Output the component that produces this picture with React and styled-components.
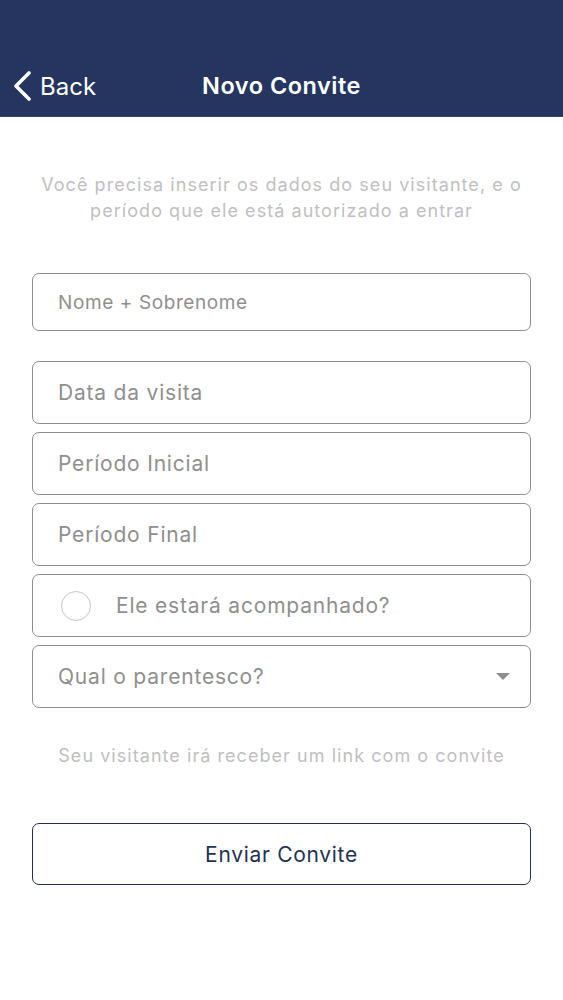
import React from "react";
import styled, { createGlobalStyle } from "styled-components";

const GlobalStyle = createGlobalStyle`
  html, body {
    margin: 0;
    padding: 0;
    background: #ffffff;
  }
  body {
    font-family: Inter, "Open Sans", "Liberation Sans", sans-serif;
    -webkit-font-smoothing: antialiased;
  }
`;

const Screen = styled.div`
  width: 563px;
  min-height: 1000px;
  background: #ffffff;
  display: flex;
  flex-direction: column;
`;

const Header = styled.header`
  height: 117px;
  background: #253560;
  box-sizing: border-box;
  padding-top: 68px;
  display: grid;
  grid-template-columns: 1fr auto 1fr;
  align-items: start;
  border-bottom: 1px solid #3a4564;
`;

const BackButton = styled.button`
  display: flex;
  align-items: center;
  gap: 8px;
  background: none;
  border: none;
  padding: 0 0 0 12px;
  color: #ffffff;
  font-family: inherit;
  font-size: 24px;
  font-weight: 400;
  height: 36px;
  cursor: pointer;
  justify-self: start;
`;

const Title = styled.h1`
  margin: 0;
  color: #ffffff;
  font-size: 23.5px;
  font-weight: 600;
  letter-spacing: 0.5px;
  height: 36px;
  line-height: 36px;
`;

const Body = styled.main`
  display: flex;
  flex-direction: column;
  padding: 0 32px;
`;

const Hint = styled.p`
  margin: ${(p) => p.$margin};
  text-align: center;
  color: #bfbfbf;
  font-size: 18px;
  line-height: 26px;
  letter-spacing: 1.05px;
  white-space: nowrap;
`;

const Form = styled.div`
  display: flex;
  flex-direction: column;
  gap: 8px;
`;

const Field = styled.div`
  height: ${(p) => p.$height || 63}px;
  box-sizing: border-box;
  border: 1.5px solid #8e8e8e;
  border-radius: 7px;
  display: flex;
  align-items: center;
  padding: 0 ${(p) => p.$padRight || 20}px 0 ${(p) => p.$padLeft || 25}px;
  margin-bottom: ${(p) => p.$after || 0}px;
`;

const Placeholder = styled.span`
  flex: 1;
  color: #8f8f8f;
  font-size: ${(p) => p.$size || 21}px;
  letter-spacing: ${(p) => p.$spacing || 0.8}px;
`;

const Radio = styled.span`
  width: 30px;
  height: 30px;
  border-radius: 50%;
  border: 1.5px solid #c6c6c6;
  box-sizing: border-box;
  margin-right: 25px;
  flex-shrink: 0;
`;

const Caret = styled.span`
  width: 0;
  height: 0;
  border-left: 7px solid transparent;
  border-right: 7px solid transparent;
  border-top: 7px solid #8e8e8e;
`;

const SendButton = styled.button`
  height: 62px;
  border: 1.5px solid #253055;
  border-radius: 7px;
  background: #ffffff;
  color: #253055;
  font-family: inherit;
  font-size: 21px;
  letter-spacing: 0.7px;
  cursor: pointer;
`;

const ChevronLeft = () => (
  <svg width="20" height="30" viewBox="0 0 20 30">
    <path
      d="M17 2 L4 15 L17 28"
      fill="none"
      stroke="#ffffff"
      strokeWidth="3.6"
      strokeLinecap="round"
      strokeLinejoin="round"
    />
  </svg>
);

export default function App() {
  return (
    <Screen>
      <GlobalStyle />
      <Header>
        <BackButton>
          <ChevronLeft />
          Back
        </BackButton>
        <Title>Novo Convite</Title>
        <span />
      </Header>
      <Body>
        <Hint $margin="55px 0 49px">
          Você precisa inserir os dados do seu visitante, e o
          <br />
          período que ele está autorizado a entrar
        </Hint>
        <Form>
          <Field $height={58} $after={22}>
            <Placeholder $size={19} $spacing={0.6}>
              Nome + Sobrenome
            </Placeholder>
          </Field>
          <Field>
            <Placeholder>Data da visita</Placeholder>
          </Field>
          <Field>
            <Placeholder>Período Inicial</Placeholder>
          </Field>
          <Field>
            <Placeholder>Período Final</Placeholder>
          </Field>
          <Field $padLeft={28}>
            <Radio />
            <Placeholder>Ele estará acompanhado?</Placeholder>
          </Field>
          <Field>
            <Placeholder>Qual o parentesco?</Placeholder>
            <Caret />
          </Field>
        </Form>
        <Hint $margin="35px 0 54px">
          Seu visitante irá receber um link com o convite
        </Hint>
        <SendButton>Enviar Convite</SendButton>
      </Body>
    </Screen>
  );
}
